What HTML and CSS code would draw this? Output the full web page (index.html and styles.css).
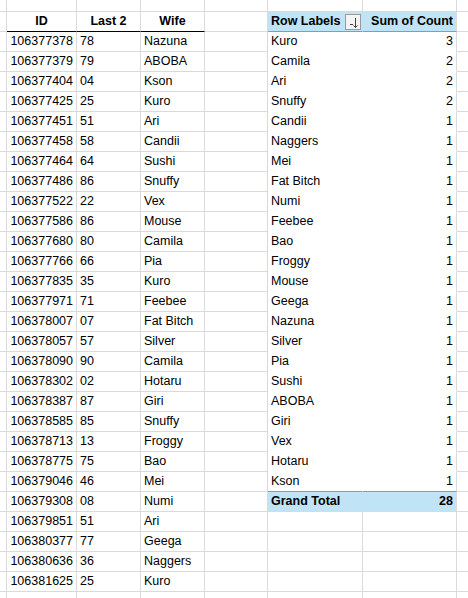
FILE: index.html
```html
<!DOCTYPE html>
<html>
<head>
<meta charset="utf-8">
<link rel="stylesheet" href="styles.css">
</head>
<body>
<div class="sheet">
  <div class="r top"><div class="c"></div><div class="c"></div><div class="c"></div><div class="c"></div><div class="c"></div><div class="c"></div><div class="c"></div><div class="c"></div></div>
  <div class="r"><div class="c"></div><div class="c hd">ID</div><div class="c hd">Last 2</div><div class="c hd">Wife</div><div class="c"></div><div class="c ph pl rl"><span>Row Labels</span><span class="fbtn"><svg width="14" height="14" viewBox="0 0 14 14"><path d="M4 9.5H7M9.5 3V12.5M7.5 10.5L9.5 12.5L11.5 10.5" fill="none" stroke="#444" stroke-width="1"/></svg></span></div><div class="c ph num">Sum of Count</div><div class="c"></div></div>
  <div class="r"><div class="c"></div><div class="c num">106377378</div><div class="c">78</div><div class="c">Nazuna</div><div class="c"></div><div class="c pv pl">Kuro</div><div class="c pv num">3</div><div class="c"></div></div>
  <div class="r"><div class="c"></div><div class="c num">106377379</div><div class="c">79</div><div class="c">ABOBA</div><div class="c"></div><div class="c pv pl">Camila</div><div class="c pv num">2</div><div class="c"></div></div>
  <div class="r"><div class="c"></div><div class="c num">106377404</div><div class="c">04</div><div class="c">Kson</div><div class="c"></div><div class="c pv pl">Ari</div><div class="c pv num">2</div><div class="c"></div></div>
  <div class="r"><div class="c"></div><div class="c num">106377425</div><div class="c">25</div><div class="c">Kuro</div><div class="c"></div><div class="c pv pl">Snuffy</div><div class="c pv num">2</div><div class="c"></div></div>
  <div class="r"><div class="c"></div><div class="c num">106377451</div><div class="c">51</div><div class="c">Ari</div><div class="c"></div><div class="c pv pl">Candii</div><div class="c pv num">1</div><div class="c"></div></div>
  <div class="r"><div class="c"></div><div class="c num">106377458</div><div class="c">58</div><div class="c">Candii</div><div class="c"></div><div class="c pv pl">Naggers</div><div class="c pv num">1</div><div class="c"></div></div>
  <div class="r"><div class="c"></div><div class="c num">106377464</div><div class="c">64</div><div class="c">Sushi</div><div class="c"></div><div class="c pv pl">Mei</div><div class="c pv num">1</div><div class="c"></div></div>
  <div class="r"><div class="c"></div><div class="c num">106377486</div><div class="c">86</div><div class="c">Snuffy</div><div class="c"></div><div class="c pv pl">Fat Bitch</div><div class="c pv num">1</div><div class="c"></div></div>
  <div class="r"><div class="c"></div><div class="c num">106377522</div><div class="c">22</div><div class="c">Vex</div><div class="c"></div><div class="c pv pl">Numi</div><div class="c pv num">1</div><div class="c"></div></div>
  <div class="r"><div class="c"></div><div class="c num">106377586</div><div class="c">86</div><div class="c">Mouse</div><div class="c"></div><div class="c pv pl">Feebee</div><div class="c pv num">1</div><div class="c"></div></div>
  <div class="r"><div class="c"></div><div class="c num">106377680</div><div class="c">80</div><div class="c">Camila</div><div class="c"></div><div class="c pv pl">Bao</div><div class="c pv num">1</div><div class="c"></div></div>
  <div class="r"><div class="c"></div><div class="c num">106377766</div><div class="c">66</div><div class="c">Pia</div><div class="c"></div><div class="c pv pl">Froggy</div><div class="c pv num">1</div><div class="c"></div></div>
  <div class="r"><div class="c"></div><div class="c num">106377835</div><div class="c">35</div><div class="c">Kuro</div><div class="c"></div><div class="c pv pl">Mouse</div><div class="c pv num">1</div><div class="c"></div></div>
  <div class="r"><div class="c"></div><div class="c num">106377971</div><div class="c">71</div><div class="c">Feebee</div><div class="c"></div><div class="c pv pl">Geega</div><div class="c pv num">1</div><div class="c"></div></div>
  <div class="r"><div class="c"></div><div class="c num">106378007</div><div class="c">07</div><div class="c">Fat Bitch</div><div class="c"></div><div class="c pv pl">Nazuna</div><div class="c pv num">1</div><div class="c"></div></div>
  <div class="r"><div class="c"></div><div class="c num">106378057</div><div class="c">57</div><div class="c">Silver</div><div class="c"></div><div class="c pv pl">Silver</div><div class="c pv num">1</div><div class="c"></div></div>
  <div class="r"><div class="c"></div><div class="c num">106378090</div><div class="c">90</div><div class="c">Camila</div><div class="c"></div><div class="c pv pl">Pia</div><div class="c pv num">1</div><div class="c"></div></div>
  <div class="r"><div class="c"></div><div class="c num">106378302</div><div class="c">02</div><div class="c">Hotaru</div><div class="c"></div><div class="c pv pl">Sushi</div><div class="c pv num">1</div><div class="c"></div></div>
  <div class="r"><div class="c"></div><div class="c num">106378387</div><div class="c">87</div><div class="c">Giri</div><div class="c"></div><div class="c pv pl">ABOBA</div><div class="c pv num">1</div><div class="c"></div></div>
  <div class="r"><div class="c"></div><div class="c num">106378585</div><div class="c">85</div><div class="c">Snuffy</div><div class="c"></div><div class="c pv pl">Giri</div><div class="c pv num">1</div><div class="c"></div></div>
  <div class="r"><div class="c"></div><div class="c num">106378713</div><div class="c">13</div><div class="c">Froggy</div><div class="c"></div><div class="c pv pl">Vex</div><div class="c pv num">1</div><div class="c"></div></div>
  <div class="r"><div class="c"></div><div class="c num">106378775</div><div class="c">75</div><div class="c">Bao</div><div class="c"></div><div class="c pv pl">Hotaru</div><div class="c pv num">1</div><div class="c"></div></div>
  <div class="r"><div class="c"></div><div class="c num">106379046</div><div class="c">46</div><div class="c">Mei</div><div class="c"></div><div class="c pv pl last">Kson</div><div class="c pv num last">1</div><div class="c"></div></div>
  <div class="r"><div class="c"></div><div class="c num">106379308</div><div class="c">08</div><div class="c">Numi</div><div class="c"></div><div class="c gt pl">Grand Total</div><div class="c gt num">28</div><div class="c"></div></div>
  <div class="r"><div class="c"></div><div class="c num">106379851</div><div class="c">51</div><div class="c">Ari</div><div class="c"></div><div class="c"></div><div class="c"></div><div class="c"></div></div>
  <div class="r"><div class="c"></div><div class="c num">106380377</div><div class="c">77</div><div class="c">Geega</div><div class="c"></div><div class="c"></div><div class="c"></div><div class="c"></div></div>
  <div class="r"><div class="c"></div><div class="c num">106380636</div><div class="c">36</div><div class="c">Naggers</div><div class="c"></div><div class="c"></div><div class="c"></div><div class="c"></div></div>
  <div class="r"><div class="c"></div><div class="c num">106381625</div><div class="c">25</div><div class="c">Kuro</div><div class="c"></div><div class="c"></div><div class="c"></div><div class="c"></div></div>
  <div class="r end"><div class="c"></div><div class="c"></div><div class="c"></div><div class="c"></div><div class="c"></div><div class="c"></div><div class="c"></div><div class="c"></div></div>
</div>
</body>
</html>
```

FILE: styles.css
```css
html, body {
  margin: 0;
  padding: 0;
  background: #fff;
}

body {
  font-family: "Liberation Sans", Arial, sans-serif;
  font-size: 12.5px;
  color: #000;
}

.sheet {
  width: 468px;
  height: 598px;
  overflow: hidden;
}

.r {
  display: grid;
  grid-template-columns: 7px 70px 64px 64px 63px 95px 94px 11px;
  height: 20px;
}

.r.top {
  height: 12px;
}

.r.end {
  height: 6px;
}

.r.end .c {
  border-bottom: 0;
}

.c {
  box-sizing: border-box;
  border-right: 1px solid #dadada;
  border-bottom: 1px solid #dadada;
  padding: 0 3px;
  line-height: 19px;
  white-space: nowrap;
  overflow: hidden;
}

.c:last-child {
  border-right: 0;
}

.num {
  text-align: right;
}

.hd {
  font-weight: bold;
  text-align: center;
  border-bottom-color: #000;
}

.pv {
  border-bottom-color: transparent;
}

.pl {
  border-right-color: transparent;
}

.ph {
  background: #c0e4f5;
  font-weight: bold;
  border-bottom-color: #5fa8dc;
}

.rl {
  display: flex;
  align-items: center;
  padding-right: 1px;
}

.fbtn {
  margin-left: auto;
  box-sizing: border-box;
  width: 16px;
  height: 16px;
  border: 1px solid #9a9a9a;
  background: #f4f4f4;
  display: flex;
}

.last {
  border-bottom-color: #5fa8dc;
}

.gt {
  background: #c0e4f5;
  font-weight: bold;
}
```
